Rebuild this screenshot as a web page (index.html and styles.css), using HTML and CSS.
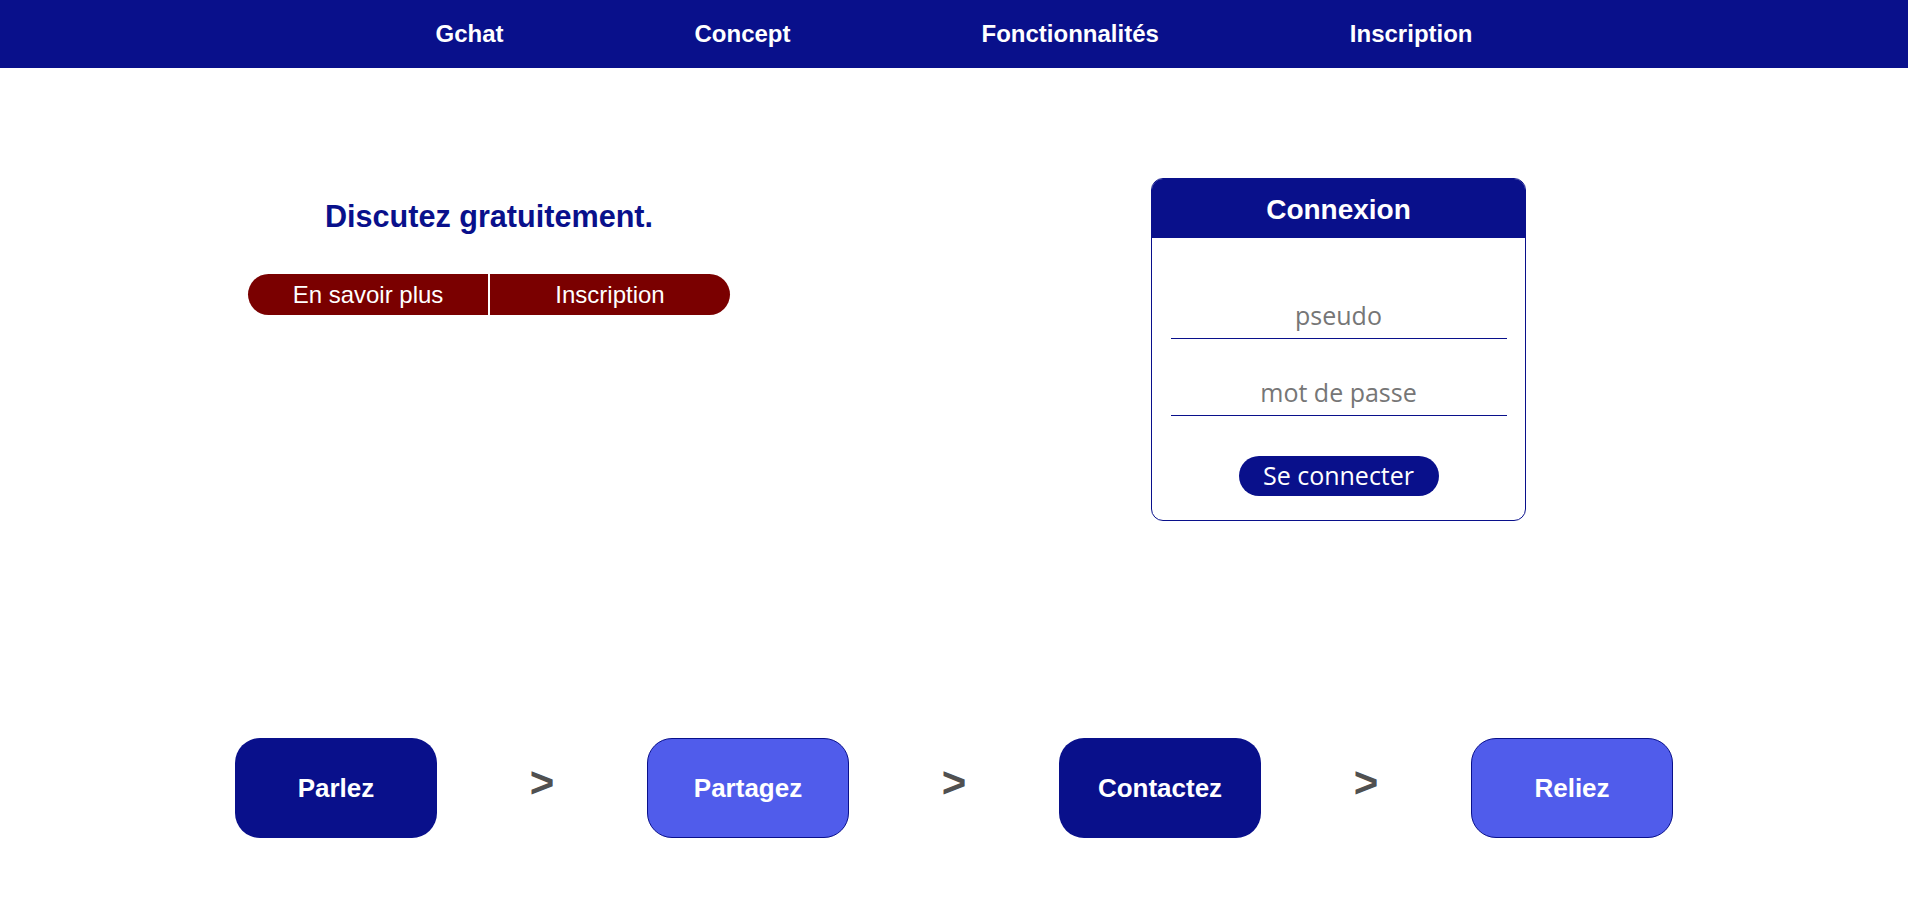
FILE: index.html
```html
<!DOCTYPE html>
<html lang="fr">
<head>
<meta charset="utf-8">
<title>Gchat</title>
<link rel="stylesheet" href="styles.css">
</head>
<body>
<nav class="nav">
  <a class="nav-link" href="#">Gchat</a>
  <a class="nav-link" href="#">Concept</a>
  <a class="nav-link" href="#">Fonctionnalités</a>
  <a class="nav-link" href="#">Inscription</a>
</nav>
<main>
  <section class="hero">
    <div class="intro">
      <h1 class="intro-title">Discutez gratuitement.</h1>
      <div class="intro-actions">
        <a class="pill pill-left" href="#">En savoir plus</a>
        <a class="pill pill-right" href="#">Inscription</a>
      </div>
    </div>
    <form class="login">
      <div class="login-head">Connexion</div>
      <div class="login-body">
        <input class="field" type="text" placeholder="pseudo">
        <input class="field field-gap" type="password" placeholder="mot de passe">
        <button class="submit" type="button">Se connecter</button>
      </div>
    </form>
  </section>
  <section class="steps">
    <div class="step step-dark">Parlez</div>
    <div class="arrow">&gt;</div>
    <div class="step step-light">Partagez</div>
    <div class="arrow">&gt;</div>
    <div class="step step-dark">Contactez</div>
    <div class="arrow">&gt;</div>
    <div class="step step-light">Reliez</div>
  </section>
</main>
</body>
</html>
```

FILE: styles.css
```css
* { box-sizing: border-box; }
body {
  margin: 0;
  font-family: "Liberation Sans", Arial, sans-serif;
  background: #fff;
}
.nav {
  height: 68px;
  background: #09108b;
  display: flex;
  justify-content: center;
  align-items: center;
  gap: 191px;
}
.nav-link {
  color: #fff;
  text-decoration: none;
  font-weight: bold;
  font-size: 24px;
}
.hero {
  display: flex;
  align-items: flex-start;
  padding: 110px 0 0 248px;
  gap: 421px;
}
.intro {
  width: 482px;
  margin-top: 21px;
  display: flex;
  flex-direction: column;
  align-items: center;
}
.intro-title {
  margin: 0;
  color: #09108b;
  font-size: 30.6px;
  font-weight: bold;
  line-height: 35px;
}
.intro-actions {
  margin-top: 40px;
  display: flex;
  gap: 2px;
}
.pill {
  width: 240px;
  height: 41px;
  display: flex;
  align-items: center;
  justify-content: center;
  background: #7a0000;
  color: #fff;
  text-decoration: none;
  font-size: 24px;
}
.pill-left { border-radius: 21px 0 0 21px; }
.pill-right { border-radius: 0 21px 21px 0; }
.login {
  width: 375px;
  margin: 0;
  border: 1px solid #09108b;
  border-radius: 12px;
  overflow: hidden;
}
.login-head {
  height: 59px;
  background: #09108b;
  color: #fff;
  font-weight: bold;
  font-size: 28px;
  display: flex;
  align-items: center;
  justify-content: center;
  padding-top: 2px;
}
.login-body {
  display: flex;
  flex-direction: column;
  align-items: center;
  padding: 61px 19px 24px 19px;
}
.field {
  width: 336px;
  height: 40px;
  border: none;
  border-bottom: 1px solid #09108b;
  padding: 0 0 7px 0;
  font-family: "Open Sans", sans-serif;
  font-size: 25px;
  text-align: center;
  outline: none;
  background: transparent;
}
.field::placeholder { color: #767676; }
.field-gap { margin-top: 37px; }
.submit {
  margin-top: 40px;
  height: 40px;
  width: 200px;
  border: none;
  border-radius: 20px;
  background: #09108b;
  color: #fff;
  font-family: "Open Sans", sans-serif;
  font-size: 25px;
  padding: 0 0 2px 0;
}
.steps {
  margin-top: 217px;
  display: flex;
  justify-content: center;
  align-items: center;
}
.step {
  width: 202px;
  height: 100px;
  border-radius: 25px;
  display: flex;
  align-items: center;
  justify-content: center;
  color: #fff;
  font-weight: bold;
  font-size: 26px;
}
.step-dark { background: #09108b; }
.step-light { background: #505ceb; border: 1px solid #09108b; }
.arrow {
  width: 210px;
  text-align: center;
  color: #505050;
  font-weight: bold;
  font-size: 42px;
  margin-top: -10px;
}
```
